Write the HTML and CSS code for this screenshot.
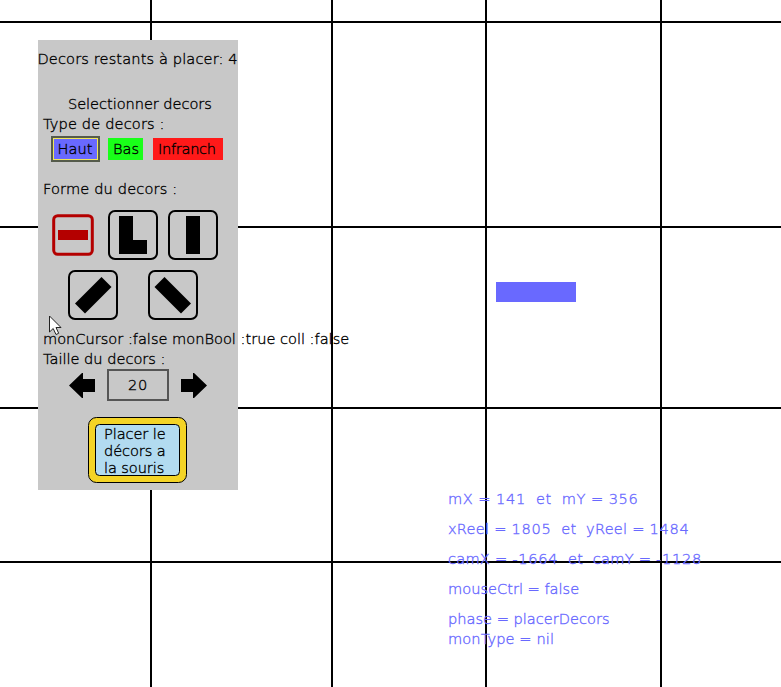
FILE: index.html
```html
<!DOCTYPE html>
<html lang="fr">
<head>
<meta charset="utf-8">
<title>Placement des decors</title>
<link rel="stylesheet" href="styles.css">
</head>
<body>
<main class="world">
  <svg class="grid" width="781" height="687" shape-rendering="crispEdges">
    <path d="M151 0V687M332 0V687M486 0V687M661 0V687M0 22H781M0 227H781M0 408H781M0 562H781" stroke="#000" stroke-width="2"/>
    <rect x="496" y="282" width="80" height="20" fill="#6969ff"/>
  </svg>
  <section class="panel">
    <p class="remaining">Decors restants à placer: 4</p>
    <p class="heading">Selectionner decors</p>
    <p class="label">Type de decors :</p>
    <div class="types">
      <button class="type high">Haut</button>
      <button class="type low">Bas</button>
      <button class="type block">Infranch</button>
    </div>
    <p class="label shape-label">Forme du decors :</p>
    <div class="shapes">
      <svg class="small" width="42" height="42" viewBox="0 0 42 42"><rect x="1.7" y="1.7" width="38.6" height="38.6" rx="4" fill="none" stroke="#b40000" stroke-width="3"/><path d="M6 16h30v10H6z" fill="#b40000"/></svg>
      <svg width="50" height="50"><rect x="1" y="1" width="48" height="48" rx="6" fill="none" stroke="#000" stroke-width="2"/><path d="M11 6h14v24h14v14H11z"/></svg>
      <svg width="50" height="50"><rect x="1" y="1" width="48" height="48" rx="6" fill="none" stroke="#000" stroke-width="2"/><path d="M18 6h14v38H18z"/></svg>
    </div>
    <div class="diagonals">
      <svg width="50" height="50"><rect x="1" y="1" width="48" height="48" rx="6" fill="none" stroke="#000" stroke-width="2"/><path d="M33.5 7l10 10L17 43.500l-10-10z"/></svg>
      <svg width="50" height="50"><rect x="1" y="1" width="48" height="48" rx="6" fill="none" stroke="#000" stroke-width="2"/><path d="M16.500 7l-10 10L33 43.500l10-10z"/></svg>
    </div>
    <p class="label state">monCursor :false monBool :true coll :false</p>
    <p class="label size-label">Taille du decors :</p>
    <div class="sizer">
      <svg width="26" height="25"><path d="M0 12.500L13 0h1v6h12v13H14v6h-1z"/></svg>
      <div class="value"><span class="num">20</span></div>
      <svg width="26" height="25"><path d="M26 12.500L13 0h-1v6H0v13h12v6h1z"/></svg>
    </div>
    <button class="place"><svg class="frame" width="99" height="66"><rect x=".5" y=".5" width="98" height="65" rx="8" fill="#f4d426" stroke="#000"/><rect x="7.500" y="7.500" width="84" height="51" rx="4" fill="#b2dbf0" stroke="#000"/></svg><span>Placer le</span><span>décors a</span><span>la souris</span></button>
  </section>
  <section class="debug">
    <p class="wide">mX = <span class="num">141</span>  et  mY = <span class="num">356</span></p>
    <p class="mid">xReel = <span class="num">1805</span>  et  yReel = <span class="num">1484</span></p>
    <p class="mid">camX = <span class="num">-1664</span>  et  camY = <span class="num">-1128</span></p>
    <p>mouseCtrl = false</p>
    <p class="tight">phase = placerDecors</p>
    <p class="last">monType = nil</p>
  </section>
  <svg class="cursor" width="13" height="21" viewBox="0 0 13 21"><path d="M.5 1v16l3.700-3.500L7 19.500l2.700-1.200L7 12.500h5z" fill="#fff" stroke="#222"/></svg>
</main>
</body>
</html>
```
FILE: styles.css
```css
* { box-sizing: border-box; }
body {
  margin: 0;
  background: #fff;
  font: 200 14.6px/15px "DejaVu Sans", sans-serif;
  color: #000;
  -webkit-text-stroke: 0.35px currentColor;
}
p { margin: 0; white-space: pre; height: 17px; }
svg { display: block; }
button { font: inherit; color: inherit; border: 0; padding: 0; margin: 0; white-space: pre; }
.world { position: relative; width: 781px; height: 687px; overflow: hidden; }
.grid { position: absolute; inset: 0; }
.panel {
  position: absolute;
  left: 38px;
  top: 40px;
  width: 200px;
  height: 450px;
  padding-top: 11px;
  background: #c8c8c8;
}
.remaining { letter-spacing: 0.12px; margin-left: -0.5px; }
.heading { margin-top: 28px; padding-left: 30px; letter-spacing: -0.06px; }
.label { padding-left: 5px; margin-top: 3px; letter-spacing: 0.14px; }
.types { display: flex; align-items: center; height: 26px; margin-top: 3px; padding-left: 13px; }
.type { height: 22px; text-align: left; padding: 0 0 2px 5px; }
.high { width: 49px; height: 26px; padding-left: 4.5px; background: #6969ff; border: 2px solid #555b4b; box-shadow: inset 0 0 0 1px #f0e65a; }
.low { width: 35px; margin-left: 8px; background: #19ff19; }
.block { width: 70px; margin-left: 10px; background: #ff1919; letter-spacing: -0.3px; }
.shape-label { margin-top: 19px; }
.shapes { display: flex; align-items: center; gap: 10px; margin-top: 12px; padding-left: 14px; }
.small { margin-right: 4px; }
.diagonals { display: flex; gap: 30px; margin-top: 10px; padding-left: 30px; }
.state { margin-top: 11px; letter-spacing: -0.01px; }
.size-label { letter-spacing: -0.02px; }
.sizer { display: flex; align-items: center; gap: 12px; margin-top: 1px; padding-left: 31px; }
.value { width: 62px; height: 32px; padding: 6px 0 0 19px; border: 2px solid #555; }
.num { letter-spacing: 0.7px; }
.place {
  position: relative;
  display: flex;
  flex-direction: column;
  align-items: flex-start;
  justify-content: flex-start;
  width: 99px;
  height: 66px;
  margin: 16px 0 0 50px;
  padding: 9px 0 0 16px;
  background: none;
  letter-spacing: -0.1px;
}
.place span { position: relative; height: 17px; }
.frame { position: absolute; inset: 0; }
.debug {
  position: absolute;
  left: 448px;
  top: 491px;
  color: #6969ff;
  letter-spacing: 0;
}
.debug p { margin-bottom: 13px; }
.debug .tight { margin-bottom: 3px; }
.debug .wide { letter-spacing: 0.44px; }
.debug .mid { letter-spacing: 0.23px; }
.debug .last { letter-spacing: 0.1px; }
.cursor { position: absolute; left: 49px; top: 315px; }
```
